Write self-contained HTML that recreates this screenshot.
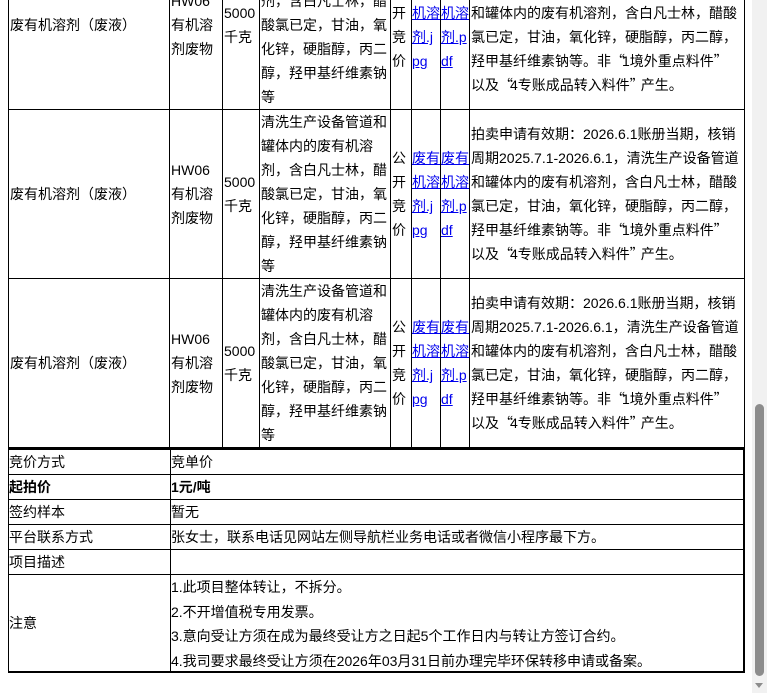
<!DOCTYPE html>
<html><head><meta charset="utf-8"><style>
html,body{margin:0;padding:0;width:767px;height:693px;overflow:hidden;background:#fff;}
body{font-family:"Liberation Sans","Noto Sans CJK SC",sans-serif;font-size:14px;color:#000;position:relative;}
.t{position:absolute;left:8px;top:-60px;border-collapse:collapse;table-layout:fixed;width:736px;}
.t td{border:1px solid #000;padding:0 1px;line-height:24px;vertical-align:middle;word-break:break-all;height:169px;box-sizing:border-box;overflow:hidden;}
.t td.l{padding:0;}
.t td.d{padding-right:0;}
a{color:#0000ee;text-decoration:underline;}
.q{font-family:"Noto Sans CJK SC",sans-serif;letter-spacing:-3px;}
.b{position:absolute;left:8px;top:448px;width:734px;height:221px;border:2px solid #000;border-left:1px solid #000;}
.r{position:absolute;left:0;width:734px;border-bottom:1px solid #000;box-sizing:border-box;}
.r .k{position:absolute;left:0;top:0;bottom:0;width:161px;border-right:1px solid #000;display:flex;align-items:center;}
.r .v{position:absolute;left:162px;top:0;bottom:0;right:0;display:flex;align-items:center;}
.notes div{line-height:24.5px;}
.sb{position:absolute;left:752px;top:0;width:15px;height:693px;background:#f1f1f1;}
.th{position:absolute;left:755px;top:404px;width:9px;height:272px;background:#8c8c8c;border-radius:5px;}
.ar{position:absolute;left:755px;top:683px;width:0;height:0;border-left:4px solid transparent;border-right:4px solid transparent;border-top:5px solid #8c8c8c;}
</style></head><body>
<table class="t">
<colgroup><col style="width:161px"><col style="width:53px"><col style="width:37px"><col style="width:131px"><col style="width:21px"><col style="width:29px"><col style="width:29px"><col style="width:275px"></colgroup>
<tr><td>废有机溶剂（废液）</td><td>HW06有机溶剂废物</td><td>5000千克</td><td>清洗生产设备管道和罐体内的废有机溶剂，含白凡士林，醋酸氯已定，甘油，氧化锌，硬脂醇，丙二醇，羟甲基纤维素钠等</td><td>公开竞价</td><td class="l"><a>废有机溶剂.jpg</a></td><td class="l"><a>废有机溶剂.pdf</a></td><td class="d">拍卖申请有效期：2026.6.1账册当期，核销周期2025.7.1-2026.6.1，清洗生产设备管道和罐体内的废有机溶剂，含白凡士林，醋酸氯已定，甘油，氧化锌，硬脂醇，丙二醇，羟甲基纤维素钠等。非<span class="q">“</span>1境外重点料件<span class="q">”</span><br>以及<span class="q">“</span>4专账成品转入料件<span class="q">”</span>产生。</td></tr>
<tr><td>废有机溶剂（废液）</td><td>HW06有机溶剂废物</td><td>5000千克</td><td>清洗生产设备管道和罐体内的废有机溶剂，含白凡士林，醋酸氯已定，甘油，氧化锌，硬脂醇，丙二醇，羟甲基纤维素钠等</td><td>公开竞价</td><td class="l"><a>废有机溶剂.jpg</a></td><td class="l"><a>废有机溶剂.pdf</a></td><td class="d">拍卖申请有效期：2026.6.1账册当期，核销周期2025.7.1-2026.6.1，清洗生产设备管道和罐体内的废有机溶剂，含白凡士林，醋酸氯已定，甘油，氧化锌，硬脂醇，丙二醇，羟甲基纤维素钠等。非<span class="q">“</span>1境外重点料件<span class="q">”</span><br>以及<span class="q">“</span>4专账成品转入料件<span class="q">”</span>产生。</td></tr>
<tr><td>废有机溶剂（废液）</td><td>HW06有机溶剂废物</td><td>5000千克</td><td>清洗生产设备管道和罐体内的废有机溶剂，含白凡士林，醋酸氯已定，甘油，氧化锌，硬脂醇，丙二醇，羟甲基纤维素钠等</td><td>公开竞价</td><td class="l"><a>废有机溶剂.jpg</a></td><td class="l"><a>废有机溶剂.pdf</a></td><td class="d">拍卖申请有效期：2026.6.1账册当期，核销周期2025.7.1-2026.6.1，清洗生产设备管道和罐体内的废有机溶剂，含白凡士林，醋酸氯已定，甘油，氧化锌，硬脂醇，丙二醇，羟甲基纤维素钠等。非<span class="q">“</span>1境外重点料件<span class="q">”</span><br>以及<span class="q">“</span>4专账成品转入料件<span class="q">”</span>产生。</td></tr>
</table>
<div class="b">
<div class="r" style="top:0;height:25px"><div class="k">竞价方式</div><div class="v">竞单价</div></div>
<div class="r" style="top:25px;height:25px;font-weight:bold"><div class="k">起拍价</div><div class="v">1元/吨</div></div>
<div class="r" style="top:50px;height:25px"><div class="k">签约样本</div><div class="v">暂无</div></div>
<div class="r" style="top:75px;height:25px"><div class="k">平台联系方式</div><div class="v">张女士，联系电话见网站左侧导航栏业务电话或者微信小程序最下方。</div></div>
<div class="r" style="top:100px;height:25px"><div class="k">项目描述</div><div class="v"></div></div>
<div class="r" style="top:125px;height:96px;border-bottom:none"><div class="k">注意</div><div class="v notes" style="display:block;padding-top:0">
<div>1.此项目整体转让，不拆分。</div><div>2.不开增值税专用发票。</div><div>3.意向受让方须在成为最终受让方之日起5个工作日内与转让方签订合约。</div><div>4.我司要求最终受让方须在2026年03月31日前办理完毕环保转移申请或备案。</div></div></div>
</div>
<div class="sb"></div><div class="th"></div><div class="ar"></div>
</body></html>
